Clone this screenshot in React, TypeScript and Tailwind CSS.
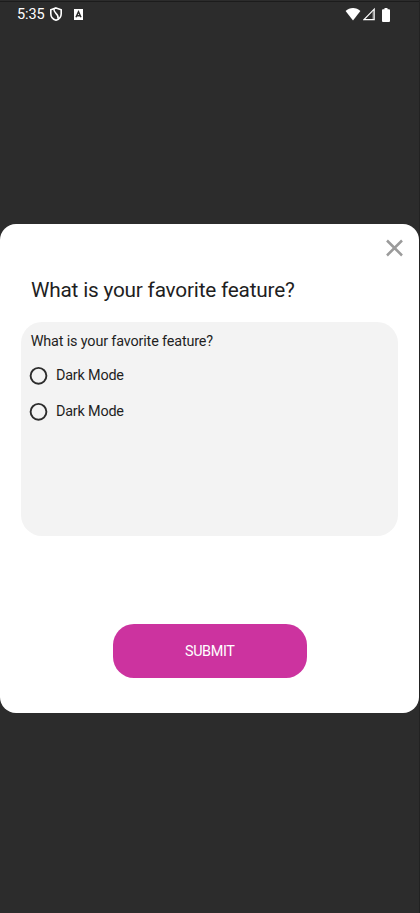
const options = ["Dark Mode", "Dark Mode"];

function StatusBar() {
  return (
    <header className="flex h-[28px] items-start justify-between pt-[5px] pr-[29px] pl-[17px] text-white">
      <div className="flex items-start">
        <span className="w-[33px] text-[14.5px] leading-[15px] tracking-[-0.1px] whitespace-nowrap">5:35</span>
        <svg width="12" height="14" viewBox="0 0 12 14" fill="none" stroke="currentColor" strokeWidth="1.6">
          <path d="M6 .9 11.2 2.8V6.8C11.2 10 9 12.4 6 13.2 3 12.4 .8 10 .8 6.8V2.8Z" />
          <path d="M4 1.8C2.8 6.4 9.4 6.4 8 11.6" strokeWidth="1.5" />
        </svg>
        <svg className="mt-[2px] ml-[12px]" width="10" height="11" viewBox="0 0 10 11">
          <path fill="#fff" d="M0 0H9V11H0Z" />
          <path fill="none" stroke="#2c2c2c" strokeWidth="1.5" d="M2 8.3 4.5 2.8 7 8.3M2.8 6.7H6.2" />
        </svg>
      </div>
      <div className="flex items-start">
        <svg width="16" height="14" viewBox="0 0 16 14">
          <path fill="#fff" d="M.6 4C4.5 0 11.5 0 15.4 4L8 13.4Z" />
        </svg>
        <svg className="ml-[2px]" width="13" height="14" viewBox="0 0 13 14">
          <path fill="none" stroke="#fff" strokeWidth="1.2" d="M1 12.6H11.2V2.2Z" />
          <path stroke="#aaa" strokeWidth="1.6" d="M10.4 4V12" />
        </svg>
        <svg className="ml-[6px] mt-[.5px]" width="8" height="14" viewBox="0 0 8 14">
          <path fill="#fff" d="M2.5 0H5.5V1.3H7A1 1 0 0 1 8 2.3V13A1 1 0 0 1 7 14H1A1 1 0 0 1 0 13V2.3A1 1 0 0 1 1 1.3H2.5Z" />
        </svg>
      </div>
    </header>
  );
}

export default function App() {
  return (
    <div className="flex h-[913px] w-[420px] flex-col border-r border-[#222222] bg-[#2c2c2c] font-['Roboto',sans-serif] text-[#1f1f1f]">
      <div className="h-[2px] border-b border-[#1c1c1c]" />
      <StatusBar />
      <main className="mt-[193.6px] flex h-[489.6px] flex-col rounded-[16px] bg-white">
        <button aria-label="Close" className="mt-[15.6px] mr-[16px] self-end">
          <svg width="17" height="18" viewBox="0 0 17 18" fill="none" stroke="#9b9b9b" strokeWidth="2.5">
            <path d="M1 1.5 16 16.5M16 1.5 1 16.5" />
          </svg>
        </button>
        <h1 className="mt-[20.4px] ml-[31px] text-[20.8px] leading-[24px] tracking-[-0.21px] whitespace-nowrap">What is your favorite feature?</h1>
        <section className="mt-[20.4px] ml-[21px] h-[214px] w-[377px] rounded-[21px] bg-[#f3f3f3] pt-[10px] pl-[8px]">
          <p className="ml-[1.7px] text-[14.4px] leading-[20px] tracking-[-0.15px]">What is your favorite feature?</p>
          <div className="mt-[14.2px] flex flex-col gap-[18px]">
            {options.map((label, i) => (
              <label key={i} className="flex h-[18px] items-center gap-[8px] text-[14.4px] leading-[18px] tracking-[-0.2px]">
                <svg width="19" height="19" viewBox="0 0 19 19" fill="none" stroke="#2c2c2c" strokeWidth="1.9">
                  <circle cx="9.5" cy="9.8" r="7.9" />
                </svg>
                <span className="pt-[2px]">{label}</span>
              </label>
            ))}
          </div>
        </section>
        <button className="mt-[88.5px] ml-[113px] h-[53.5px] w-[193.5px] rounded-[21px] bg-[#cc339f] pt-[2px] text-[14.4px] tracking-[-0.35px] text-white">SUBMIT</button>
      </main>
    </div>
  );
}
